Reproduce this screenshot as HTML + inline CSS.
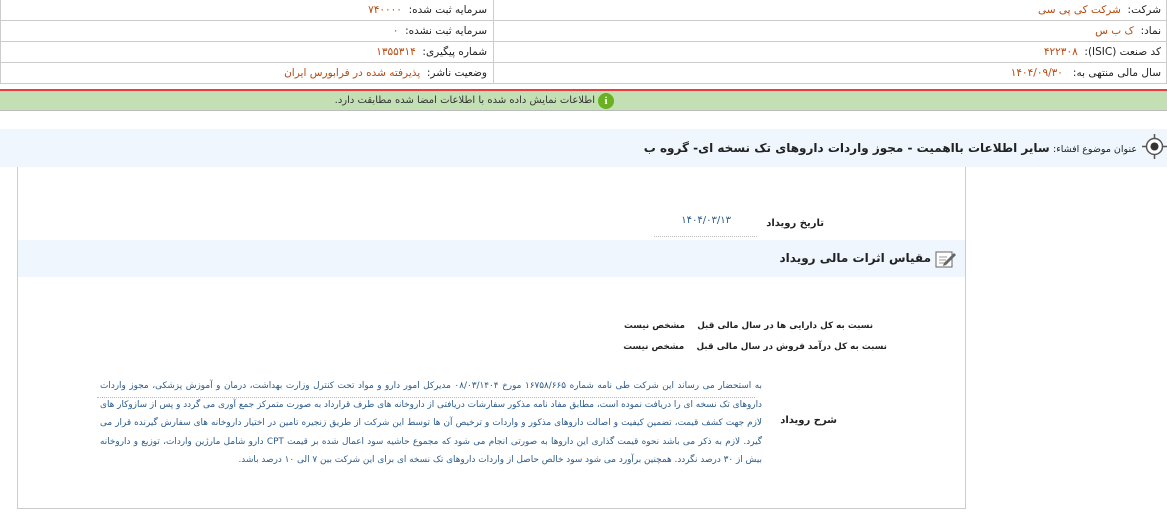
<!DOCTYPE html>
<html><head><meta charset="utf-8">
<style>
*{margin:0;padding:0;box-sizing:border-box}
body{width:1167px;height:528px;background:#fff;font-family:"DejaVu Sans","Liberation Sans",sans-serif;font-size:10.5px;color:#222;direction:rtl;position:relative;overflow:hidden}
.abs{position:absolute;white-space:nowrap}
.row{position:absolute;left:0;width:1167px;height:21px;border-bottom:1px solid #ccc}
.cell{position:absolute;top:0;height:20px;line-height:20px;white-space:nowrap}
.v{color:#b44a12}
.blue{color:#2a5a8a}
</style></head><body>
<div class="abs" style="left:0;top:0;width:1167px;height:84px;border-left:1px solid #ccc;border-right:1px solid #ccc"></div>
<div class="abs" style="left:493px;top:0;width:1px;height:83px;background:#ccc"></div>
<div class="row" style="top:0"><span class="cell" style="right:6px">شرکت:&nbsp; <span class="v">شرکت کی پی سی</span></span><span class="cell" style="right:680px">سرمایه ثبت شده:&nbsp; <span class="v">۷۴۰۰۰۰</span></span></div>
<div class="row" style="top:21px"><span class="cell" style="right:6px">نماد:&nbsp; <span class="v">ک ب س</span></span><span class="cell" style="right:680px">سرمایه ثبت نشده:&nbsp; <span class="v">۰</span></span></div>
<div class="row" style="top:42px"><span class="cell" style="right:6px">کد صنعت (ISIC):&nbsp; <span class="v">۴۲۲۳۰۸</span></span><span class="cell" style="right:680px">شماره پیگیری:&nbsp; <span class="v">۱۳۵۵۳۱۴</span></span></div>
<div class="row" style="top:63px"><span class="cell" style="right:6px">سال مالی منتهی به:&nbsp;&nbsp; <span class="v">۱۴۰۴/۰۹/۳۰</span></span><span class="cell" style="right:680px">وضعیت ناشر:&nbsp; <span class="v">پذیرفته شده در فرابورس ایران</span></span></div>
<div class="abs" style="left:0;top:89px;width:1167px;height:2px;background:#ee3b3b"></div>
<div class="abs" style="left:0;top:91px;width:1167px;height:20px;background:#c3e0b5;border-bottom:1px solid #bbb"></div>
<div class="abs" style="right:572px;top:91px;height:20px;line-height:20px;color:#333;font-size:10px">اطلاعات نمایش داده شده با اطلاعات امضا شده مطابقت دارد.</div>
<div class="abs" style="left:598px;top:93px;width:16px;height:16px;border-radius:50%;background:#6ab023;color:#fff;font-weight:bold;font-size:11px;line-height:16px;text-align:center;font-family:'Liberation Serif',serif">i</div>
<div class="abs" style="left:0;top:129px;width:1167px;height:38px;background:#eff6fd"></div>
<svg class="abs" style="left:1142px;top:134px" width="25" height="25" viewBox="0 0 25 25"><circle cx="12.5" cy="12.5" r="8" fill="#fff" stroke="#555" stroke-width="1.5"/><circle cx="12.5" cy="12.5" r="4" fill="#333"/><path d="M12.5 0v4M12.5 21v4M0 12.5h4M21 12.5h4" stroke="#555" stroke-width="1.5"/></svg>
<div class="abs" style="right:30px;top:129px;height:38px;line-height:38px"><span style="font-size:9.5px">عنوان موضوع افشاء:</span> <b style="font-size:12px">سایر اطلاعات بااهمیت - مجوز واردات داروهای تک نسخه ای- گروه ب</b></div>
<div class="abs" style="left:17px;top:167px;width:949px;height:342px;border:1px solid #ccc;border-top:none"></div>
<div class="abs" style="right:343px;top:218px;font-weight:bold;font-size:10px">تاریخ رویداد</div>
<div class="abs blue" style="right:436px;top:215px;font-size:10px">۱۴۰۴/۰۳/۱۳</div>
<div class="abs" style="left:654px;top:236px;width:103px;border-top:1px dotted #bbb"></div>
<div class="abs" style="left:18px;top:240px;width:947px;height:37px;background:#eff6fd"></div>
<svg class="abs" style="left:935px;top:249px" width="22" height="20" viewBox="0 0 22 20"><rect x="1" y="3" width="16" height="15" fill="#fff" stroke="#666"/><path d="M4 8h8M4 11h7M4 14h9" stroke="#999"/><path d="M9 14l10-10 2 2-10 10-3 1z" fill="#666"/></svg>
<div class="abs" style="right:236px;top:251px;font-weight:bold;font-size:12px">مقیاس اثرات مالی رویداد</div>
<div class="abs" style="right:294px;top:321px;font-weight:bold;font-size:8.8px">نسبت به کل دارایی ها در سال مالی قبل&nbsp;&nbsp;&nbsp; مشخص نیست</div>
<div class="abs" style="right:280px;top:342px;font-weight:bold;font-size:8.8px">نسبت به کل درآمد فروش در سال مالی قبل&nbsp;&nbsp;&nbsp; مشخص نیست</div>
<div class="abs" style="left:97px;top:397px;width:658px;border-top:1px dotted #bbb"></div>
<div class="abs" style="right:330px;top:415px;font-weight:bold;font-size:10px">شرح رویداد</div>
<div class="abs blue" style="left:100px;top:377px;width:662px;font-size:8.9px;line-height:18.5px;text-align:justify;white-space:normal">به استحضار می رساند این شرکت طی نامه شماره ۱۶۷۵۸/۶۶۵ مورخ ۰۸/۰۳/۱۴۰۴ مدیرکل امور دارو و مواد تحت کنترل وزارت بهداشت، درمان و آموزش پزشکی، مجوز واردات داروهای تک نسخه ای را دریافت نموده است، مطابق مفاد نامه مذکور سفارشات دریافتی از داروخانه های طرف قرارداد به صورت متمرکز جمع آوری می گردد و پس از سازوکار های لازم جهت کشف قیمت، تضمین کیفیت و اصالت داروهای مذکور و واردات و ترخیص آن ها توسط این شرکت از طریق زنجیره تامین در اختیار داروخانه های سفارش گیرنده قرار می گیرد. لازم به ذکر می باشد نحوه قیمت گذاری این داروها به صورتی انجام می شود که مجموع حاشیه سود اعمال شده بر قیمت CPT دارو شامل مارژین واردات، توزیع و داروخانه بیش از ۳۰ درصد نگردد. همچنین برآورد می شود سود خالص حاصل از واردات داروهای تک نسخه ای برای این شرکت بین ۷ الی ۱۰ درصد باشد.</div>
</body></html>
